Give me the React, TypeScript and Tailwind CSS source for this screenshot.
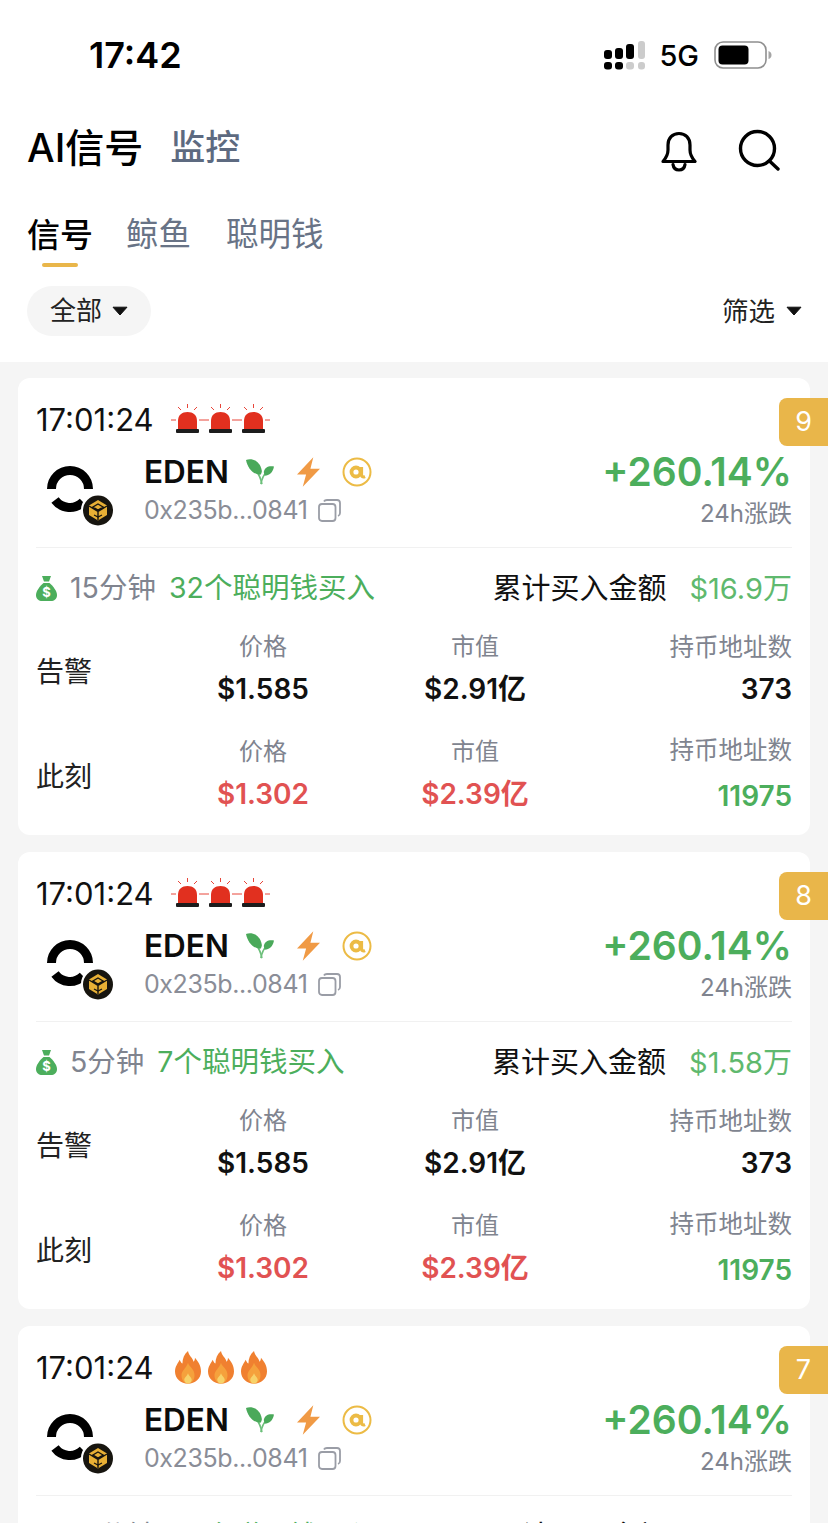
import React from "react";

const FONT = "[font-family:Inter,'Noto_Sans_CJK_SC',sans-serif]";

const SignalBars = () => (
  <svg width="42" height="29" viewBox="0 0 42 29">
    <rect x="0" y="9" width="8" height="9" rx="3" fill="#000" />
    <rect x="11" y="7" width="8" height="11" rx="3" fill="#000" />
    <rect x="22" y="3" width="8" height="15" rx="3" fill="#000" />
    <rect x="34" y="0" width="7" height="18" rx="3" fill="#ccc" />
    <rect x="0" y="21" width="8" height="7.5" rx="3" fill="#000" />
    <rect x="11" y="21" width="8" height="7.5" rx="3" fill="#000" />
    <rect x="22" y="21" width="8" height="7.5" rx="3" fill="#ccc" />
    <rect x="34" y="21" width="7" height="7.5" rx="3" fill="#ccc" />
  </svg>
);

const Battery = () => (
  <svg width="58" height="28" viewBox="0 0 58 28">
    <rect x="1" y="1" width="51" height="26" rx="8" fill="none" stroke="#8f8f8f" strokeWidth="1.6" />
    <rect x="4.5" y="4.5" width="30" height="19" rx="4" fill="#000" />
    <path d="M54.5 10 q3 1 3 4 q0 3 -3 4 z" fill="#a5a5a5" />
  </svg>
);

const Bell = () => (
  <svg width="36" height="41" viewBox="0 0 36 41" fill="none" stroke="#000" strokeWidth="3.2" strokeLinecap="round" strokeLinejoin="round">
    <path d="M2 30.5 C5 27 7 24 7 19 V14 C7 7 11.5 2.5 18 2.5 S29 7 29 14 V19 C29 24 31 27 34 30.5 Z" />
    <path d="M12 33.5 C12.500 37 15 39 18 39 S23.500 37 24 33.500" />
  </svg>
);

const Search = () => (
  <svg width="42" height="42" viewBox="0 0 42 42" fill="none" stroke="#000" strokeWidth="3.4" strokeLinecap="round">
    <circle cx="19.5" cy="19.5" r="17" />
    <path d="M31.5 32 L40 40" />
  </svg>
);

const Caret = () => (
  <svg width="16" height="10" viewBox="0 0 16 10">
    <path d="M1 1.2 H15 L8 9 Z" fill="#111" stroke="#111" strokeWidth="1" strokeLinejoin="round" />
  </svg>
);

const Alarm = () => (
  <svg width="33" height="30" viewBox="0 0 33 30">
    <g stroke="#e8463a" strokeWidth="1" fill="none">
      <path d="M16.5 0 V4" />
      <path d="M7 3 L10 6" />
      <path d="M26 3 L23 6" />
      <path d="M0 16 H5" />
      <path d="M28 16 H33" />
    </g>
    <path d="M7 25 V17 C7 11 11 8 16.5 8 S26 11 26 17 V25 Z" fill="#e1301f" />
    <rect x="5" y="25" width="23" height="4" rx="1" fill="#1c1c1c" />
  </svg>
);

const Flame = () => (
  <svg width="26" height="33" viewBox="0 0 28 34" preserveAspectRatio="none">
    <path d="M14 0 C15 5 19 7 20 11 C21 10 21.500 9 21.500 7 C25 11 28 15 28 21 C28 28.500 21.500 33.500 14 33.500 S0 28.500 0 21 C0 16 3 13 5 9 C6 11 6.500 12 8 13 C8 8 10 3 14 0 Z" fill="#f08030" />
    <path d="M14 12 C15 16 21 18 21 25 C21 30 18 33.500 14 33.500 S7 30 7 25 C7 20 12 18 14 12 Z" fill="#f5a13c" />
    <path d="M14 23 C15 26 18 27 18 30 C18 32 16 33.500 14 33.500 S10 32 10 30 C10 27 13 26 14 23 Z" fill="#f7d26a" />
  </svg>
);

const Leaf = () => (
  <svg width="28" height="26" viewBox="0 0 30 28" preserveAspectRatio="none">
    <path d="M17 27 C16 21 14 17 11 13" stroke="#6cbf7a" strokeWidth="1.800" fill="none" />
    <path d="M16 27 C17 21 19 17 22 14" stroke="#6cbf7a" strokeWidth="1.800" fill="none" />
    <path d="M0 1 C6 -1 15 1 17 13 C17 15 16 17 15 17 C7 16 2 10 0 1 Z" fill="#4aa95a" />
    <path d="M19 14 C20 9 24 7 30 8 C29 14 25 18 20 18 Z" fill="#4aa95a" />
  </svg>
);

const Bolt = () => (
  <svg width="23" height="30" viewBox="0 0 24 31">
    <path d="M17 0 L0 18 L9.500 18 L6 31 L24 12 L14 12 Z" fill="#f09a45" />
  </svg>
);

const AtBadge = () => (
  <svg width="30" height="30" viewBox="0 0 30 30" fill="none">
    <circle cx="15" cy="15" r="13.500" stroke="#ecbb45" strokeWidth="2" />
    <circle cx="14" cy="15" r="4.500" stroke="#ecbb45" strokeWidth="3.800" />
    <path d="M19.500 10 V17 C19.500 20 21 20.500 23 19.500" stroke="#ecbb45" strokeWidth="3.200" />
  </svg>
);

const Copy = () => (
  <svg width="23" height="23" viewBox="0 0 23 23" fill="none" stroke="#9a9da6" strokeWidth="1.800" strokeLinejoin="round">
    <rect x="1" y="5" width="16.500" height="17" rx="3" />
    <path d="M6 2.500 C6.500 1.500 7.500 1 9 1 H19 C21 1 22 2 22 4 V14 C22 15.500 21.500 16.500 20 17" />
  </svg>
);

const MoneyBag = () => (
  <svg width="21" height="25" viewBox="0 0 21 25">
    <path d="M6 0 H15 L13 5.500 H8 Z" fill="#4cae5c" />
    <path d="M7.500 7 H13.500 C17 10 21 15 21 19 C21 23 18 25 15 25 H6 C3 25 0 23 0 19 C0 15 4 10 7.500 7 Z" fill="#4cae5c" />
    <text x="10.500" y="21" textAnchor="middle" fontSize="13" fontWeight="700" fill="#fff" fontFamily="Inter">$</text>
  </svg>
);

const TokenLogo = () => (
  <svg width="70" height="62" viewBox="0 0 70 62">
    <path d="M6.500 24 A18.500 18.500 0 0 1 43.500 24" fill="none" stroke="#000" strokeWidth="9" />
    <path d="M10 35 A18.500 18.500 0 0 0 38 37" fill="none" stroke="#000" strokeWidth="9" />
    <circle cx="53" cy="45" r="17" fill="#fff" />
    <circle cx="53" cy="45.500" r="15" fill="#17150f" />
    <path d="M53 35 L62 40.500 V50 L53 55.500 L44 50 V40.500 Z" fill="#e8b035" />
    <path d="M53 39 L58 42 L53 45 L48 42 Z M44 41 L53 46.500 L62 41 M53 46.500 V55" fill="none" stroke="#17150f" strokeWidth="1.400" />
    <path d="M49 50 L53 52 L57 50" fill="none" stroke="#17150f" strokeWidth="1.200" />
  </svg>
);

type SignalItem = {
  rank: number;
  level: "alarm" | "fire";
  minutes: string;
  smart: string;
  amount: string;
};

const SIGNALS: SignalItem[] = [
  { rank: 9, level: "alarm", minutes: "15分钟", smart: "32个聪明钱买入", amount: "$16.9万" },
  { rank: 8, level: "alarm", minutes: "5分钟", smart: "7个聪明钱买入", amount: "$1.58万" },
  { rank: 7, level: "fire", minutes: "15分钟", smart: "32个聪明钱买入", amount: "$16.9万" },
];

const StatRow: React.FC<{
  label: string;
  price: string;
  cap: string;
  holders: string;
  now?: boolean;
}> = ({ label, price, cap, holders, now }) => {
  const color = now ? "text-[#e15252]" : "text-[#111]";
  return (
    <div className="grid h-[104.5px] grid-cols-[121px_212px_212px_1fr] items-center">
      <div className="pt-[8px] text-[28px] leading-none text-[#222]">{label}</div>
      <div className="flex flex-col items-center">
        <span className="text-[24px] leading-[30px] text-[#80848f]">价格</span>
        <span className={`mt-[12px] text-[28px] font-semibold leading-[30px] ${color}`}>{price}</span>
      </div>
      <div className="flex flex-col items-center">
        <span className="text-[24px] leading-[30px] text-[#80848f]">市值</span>
        <span className={`mt-[12px] text-[28px] font-semibold leading-[30px] ${color}`}>{cap}</span>
      </div>
      <div className="flex flex-col items-end">
        <span className="text-[24.5px] leading-[30px] text-[#80848f]">持币地址数</span>
        <span className={`text-[28px] font-semibold leading-[30px] ${now ? "mt-[16px] text-[#4cae5c]" : "mt-[12px] text-[#111]"}`}>
          {holders}
        </span>
      </div>
    </div>
  );
};

const SignalCard: React.FC<{ signal: SignalItem }> = ({ signal }) => (
  <div className="relative h-[457px] shrink-0 rounded-[12px] bg-white px-[18px] pt-[21px]">
    {/* rank tab */}
    <div className="absolute right-[-18px] top-[20px] flex h-[48px] w-[49px] items-center justify-center rounded-l-[8px] bg-[#e9b64a] text-[27px] text-white">
      {signal.rank}
    </div>

    <div className="flex h-[40px] items-center">
      <span className="text-[31px] leading-none text-[#111]">17:01:24</span>
      {signal.level === "alarm" ? (
        <div className="ml-[17px] flex items-center">
          <Alarm />
          <Alarm />
          <Alarm />
        </div>
      ) : (
        <div className="ml-[21px] flex gap-[7px]">
          <Flame />
          <Flame />
          <Flame />
        </div>
      )}
    </div>

    <div className="flex h-[109px] border-b border-[#f1f1f1]">
      <div className="w-[108px] shrink-0 pl-[9px] pt-[26px]">
        <TokenLogo />
      </div>
      <div className="pt-[14px]">
        <div className="flex h-[36px] items-center pt-[2px]">
          <span className="text-[31.5px] font-semibold leading-none text-[#0c0c0c]">EDEN</span>
          <div className="ml-[17px]">
            <Leaf />
          </div>
          <div className="ml-[23px]">
            <Bolt />
          </div>
          <div className="ml-[22px]">
            <AtBadge />
          </div>
        </div>
        <div className="mt-[4px] flex h-[34px] items-center">
          <span className="text-[25px] leading-none tracking-[-0.4px] text-[#8a8d97]">0x235b...0841</span>
          <div className="ml-[11px]">
            <Copy />
          </div>
        </div>
      </div>
      <div className="ml-auto flex flex-col items-end pt-[11px]">
        <span className="text-[39px] font-semibold leading-[44px] text-[#4cae5c]">+260.14%</span>
        <span className="mt-[5px] text-[24px] leading-[30px] text-[#80848f]">24h涨跌</span>
      </div>
    </div>

    <div className="flex h-[81px] items-center leading-none">
      <MoneyBag />
      <span className="ml-[13px] text-[28.5px] text-[#80848f]">{signal.minutes}</span>
      <span className="ml-[13px] text-[28.5px] text-[#4cae5c]">{signal.smart}</span>
      <span className="ml-auto text-[29px] text-[#111]">累计买入金额</span>
      <span className="ml-[23px] text-[29px] text-[#5fb96e]">{signal.amount}</span>
    </div>

    <div className="-mt-[13px]">
      <StatRow label="告警" price="$1.585" cap="$2.91亿" holders="373" />
      <StatRow label="此刻" price="$1.302" cap="$2.39亿" holders="11975" now />
    </div>
  </div>
);

export default function App() {
  return (
    <div className={`flex h-[1523px] w-[828px] flex-col overflow-hidden bg-[#f5f5f5] ${FONT}`}>
      <header className="h-[362px] shrink-0 bg-white">
        {/* status bar */}
        <div className="flex h-[110px] items-center justify-between pl-[89px] pr-[56px]">
          <span className="text-[36px] font-semibold leading-none text-black">17:42</span>
          <div className="flex items-center">
            <SignalBars />
            <span className="ml-[13px] text-[29px] font-medium leading-none text-black">5G</span>
            <div className="ml-[15px]">
              <Battery />
            </div>
          </div>
        </div>

        <div className="flex h-[75px] items-center pl-[27px] pr-[48px]">
          <span className="text-[39px] font-medium leading-none text-black">AI信号</span>
          <span className="ml-[27px] text-[35px] font-medium leading-none text-[#5d6a80]">监控</span>
          <div className="ml-auto flex items-center gap-[41px]">
            <div className="mt-[8px]">
              <Bell />
            </div>
            <div className="mt-[4px]">
              <Search />
            </div>
          </div>
        </div>

        <div className="flex h-[101px] pl-[27px]">
          <div className="relative">
            <span className="block pt-[34px] text-[33px] font-medium leading-none text-black">信号</span>
            <span className="absolute left-[15px] top-[78px] h-[4px] w-[36px] rounded-full bg-[#e9b64a]" />
          </div>
          <span className="ml-[33px] pt-[34px] text-[32.5px] leading-none text-[#687386]">鲸鱼</span>
          <span className="ml-[35px] pt-[34px] text-[32.5px] leading-none text-[#687386]">聪明钱</span>
        </div>

        <div className="flex h-[50px] items-center justify-between pl-[27px] pr-[26px]">
          <div className="flex h-[50px] w-[124px] items-center justify-center gap-[10px] rounded-full bg-[#f5f5f5]">
            <span className="text-[26px] leading-none text-[#222]">全部</span>
            <Caret />
          </div>
          <div className="flex items-center gap-[11px]">
            <span className="text-[26.5px] leading-none text-[#222]">筛选</span>
            <Caret />
          </div>
        </div>
      </header>

      <main className="flex flex-col gap-[17px] px-[18px] pt-[16px]">
        {SIGNALS.map((s) => (
          <SignalCard key={s.rank} signal={s} />
        ))}
      </main>
    </div>
  );
}
